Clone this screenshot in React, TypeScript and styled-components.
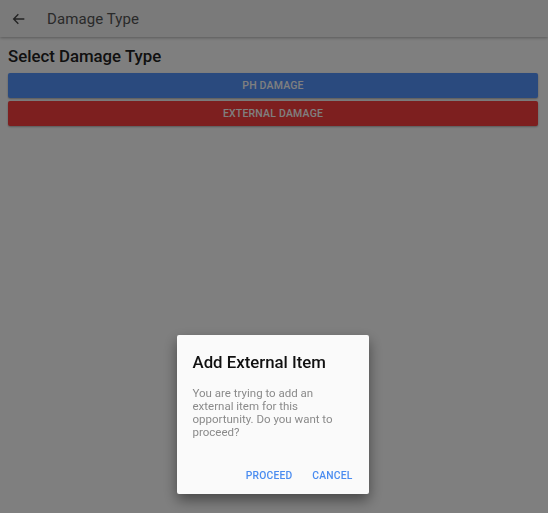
import React from "react";
import styled, { createGlobalStyle } from "styled-components";

const Global = createGlobalStyle`
  html, body { margin: 0; padding: 0; background: #ffffff; }
  body { font-family: Roboto, "Noto Sans", Arial, sans-serif; width: 548px; height: 513px; overflow: hidden; }
  * { box-sizing: border-box; }
`;

const Page = styled.div`
  width: 548px;
  height: 513px;
  display: flex;
  flex-direction: column;
  background: #ffffff;
`;

const Header = styled.header`
  height: 37px;
  display: flex;
  align-items: center;
  padding: 0 0 0 11px;
  background: #f4f4f4;
  box-shadow: 0 1px 3px rgba(0, 0, 0, 0.3);
`;

const BackButton = styled.span`
  width: 16px;
  height: 16px;
  display: flex;
  align-items: center;
  justify-content: center;
  color: #444;
`;

const HeaderTitle = styled.h1`
  margin: 0 0 0 20px;
  font-size: 15px;
  font-weight: 400;
  color: #555;
  letter-spacing: 0.1px;
`;

const Content = styled.main`
  display: flex;
  flex-direction: column;
  padding: 9px 10px 0 8px;
`;

const SectionTitle = styled.h2`
  margin: 0 0 7px 0;
  font-size: 16.8px;
  font-weight: 500;
  color: #222;
  line-height: 20px;
`;

const TypeButton = styled.button<{ $bg: string }>`
  height: 25px;
  margin-bottom: 3px;
  border: none;
  border-radius: 2px;
  background: ${(p) => p.$bg};
  color: #ffffff;
  font-family: Roboto, Arial, sans-serif;
  font-size: 10.5px;
  font-weight: 500;
  letter-spacing: 0.2px;
  text-transform: uppercase;
  box-shadow: 0 1px 2px rgba(0, 0, 0, 0.3);
`;

const Overlay = styled.div`
  position: fixed;
  inset: 0;
  background: rgba(0, 0, 0, 0.5);
  display: flex;
  align-items: flex-start;
  justify-content: center;
  padding-top: 335px;
  padding-right: 3px;
`;

const Dialog = styled.div`
  width: 192px;
  height: 159px;
  background: #fafafa;
  border-radius: 2px;
  box-shadow: 0 6px 14px rgba(0, 0, 0, 0.45);
  display: flex;
  flex-direction: column;
  padding: 17px 16px 0 16px;
`;

const DialogTitle = styled.h3`
  margin: 0;
  font-size: 16.8px;
  font-weight: 500;
  color: #111;
  line-height: 20px;
`;

const DialogText = styled.p`
  margin: 15px 0 0 0;
  font-size: 11.5px;
  line-height: 13px;
  color: #8a8a8a;
`;

const Actions = styled.div`
  display: flex;
  justify-content: flex-end;
  gap: 20px;
  margin-top: auto;
  height: 25px;
`;

const ActionButton = styled.button`
  border: none;
  background: none;
  padding: 0;
  height: 12px;
  font-family: Roboto, Arial, sans-serif;
  font-size: 10.3px;
  font-weight: 500;
  color: #4a8cf0;
  letter-spacing: 0.2px;
`;

export default function App() {
  return (
    <>
      <Global />
      <Page>
        <Header>
          <BackButton>
            <svg width="16" height="16" viewBox="0 0 24 24" fill="none">
              <path d="M20 12H4.5M11 5l-7 7 7 7" stroke="currentColor" strokeWidth="2" />
            </svg>
          </BackButton>
          <HeaderTitle>Damage Type</HeaderTitle>
        </Header>
        <Content>
          <SectionTitle>Select Damage Type</SectionTitle>
          <TypeButton $bg="#5494fc">PH DAMAGE</TypeButton>
          <TypeButton $bg="#fa3e3e">EXTERNAL DAMAGE</TypeButton>
        </Content>
      </Page>
      <Overlay>
        <Dialog>
          <DialogTitle>Add External Item</DialogTitle>
          <DialogText>
            You are trying to add an external item for this opportunity. Do you want to proceed?
          </DialogText>
          <Actions>
            <ActionButton>PROCEED</ActionButton>
            <ActionButton>CANCEL</ActionButton>
          </Actions>
        </Dialog>
      </Overlay>
    </>
  );
}
